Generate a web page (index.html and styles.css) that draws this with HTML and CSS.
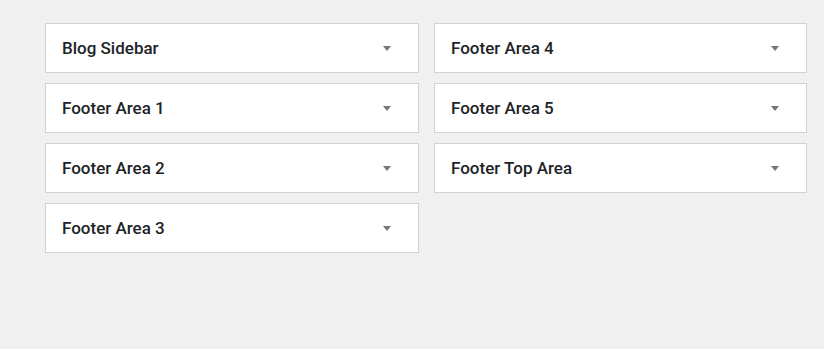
FILE: index.html
```html
<!DOCTYPE html>
<html lang="en">

<head>
    <meta charset="UTF-8">
    <meta name="viewport" content="width=device-width, initial-scale=1.0">
    <title>Widgets</title>
    <link rel="stylesheet" href="styles.css">
</head>

<body>
    <section class="areas">
        <div class="column">
            <div class="area"><h3>Blog Sidebar</h3><span class="toggle"></span></div>
            <div class="area"><h3>Footer Area 1</h3><span class="toggle"></span></div>
            <div class="area"><h3>Footer Area 2</h3><span class="toggle"></span></div>
            <div class="area"><h3>Footer Area 3</h3><span class="toggle"></span></div>
        </div>
        <div class="column">
            <div class="area"><h3>Footer Area 4</h3><span class="toggle"></span></div>
            <div class="area"><h3>Footer Area 5</h3><span class="toggle"></span></div>
            <div class="area"><h3>Footer Top Area</h3><span class="toggle"></span></div>
        </div>
    </section>
</body>

</html>
```

FILE: styles.css
```css
html,
body {
    margin: 0;
    height: 100%;
}

body {
    background-color: #f0f0f0;
    font-family: Roboto, "Liberation Sans", sans-serif;
    color: #1d2327;
}

.areas {
    display: grid;
    grid-template-columns: 374px 373px;
    column-gap: 15px;
    padding: 23px 0 0 45px;
    align-items: start;
}

.column {
    display: flex;
    flex-direction: column;
    gap: 10px;
}

.area {
    height: 48px;
    display: flex;
    align-items: center;
    justify-content: space-between;
    background-color: #fff;
    border: 1px solid #d2d2d2;
    padding: 0 27px 0 16px;
}

.area h3 {
    margin: 0;
    font-size: 17px;
    font-weight: 500;
}

.toggle {
    width: 0;
    height: 0;
    border-left: 4px solid transparent;
    border-right: 4px solid transparent;
    border-top: 5px solid #72777c;
    margin-top: 1px;
}
```
